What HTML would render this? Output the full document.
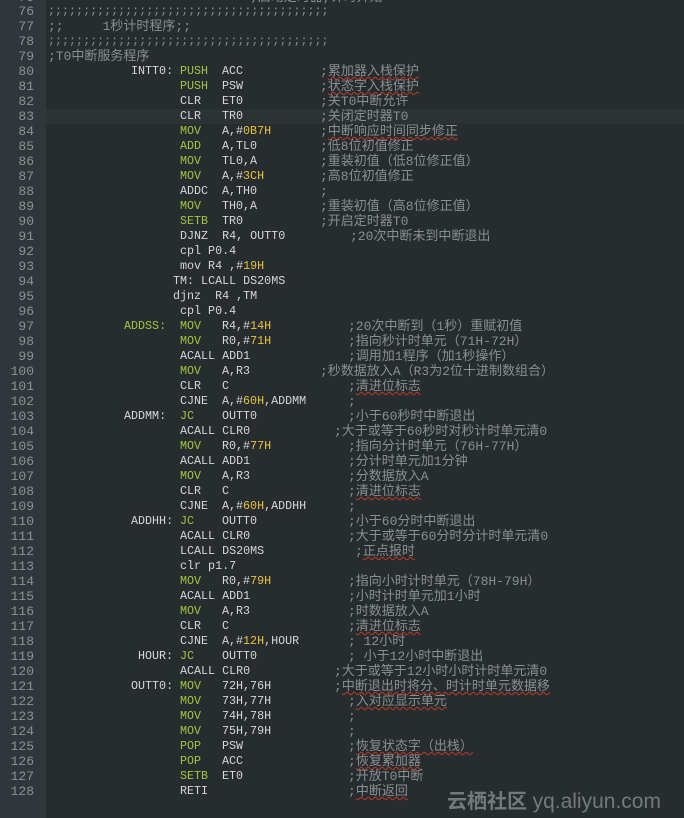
<!DOCTYPE html><html><head><meta charset="utf-8"><style>
body{margin:0;width:684px;height:818px;background:#272c2e;overflow:hidden;position:relative;font-family:"Liberation Mono","Noto Sans CJK SC",monospace;font-size:11.7px;color:#d6d6d6}
#g{position:absolute;left:0;top:0;width:46px;height:818px;background:#30373a}
.l{position:absolute;left:0;height:15px;line-height:15px;width:684px;white-space:pre}
.l .n{position:absolute;left:0;width:34px;text-align:right;color:#8c9294;font-size:13px}
.l span{position:absolute}
.g{color:#a4c440}.y{color:#e8c23c}.c{color:#8a8f91;font-size:13px}
.u{text-decoration:underline wavy #c0392b;text-decoration-thickness:1px}
#wm{position:absolute;left:447px;top:785px;font-family:"Liberation Sans","Noto Sans CJK SC",sans-serif;font-size:20px;color:#7d8284;font-weight:bold;opacity:.9}
</style></head><body><div id="g"></div>
<div class="l" style="top:-10px"><span class="n">75</span><span style="left:52px">SETB      TR0  SETB</span><span class="c" style="left:250px">;启动定时器,计时开始</span></div>
<div class="l" style="top:4px"><span class="n">76</span><span class="c" style="left:48px;font-size:11.7px">;;;;;;;;;;;;;;;;;;;;;;;;;;;;;;;;;;;;;;;;</span></div>
<div class="l" style="top:19px"><span class="n">77</span><span class="c" style="left:48px">;;     1秒计时程序;;</span></div>
<div class="l" style="top:34px"><span class="n">78</span><span class="c" style="left:48px;font-size:11.7px">;;;;;;;;;;;;;;;;;;;;;;;;;;;;;;;;;;;;;;;;</span></div>
<div class="l" style="top:49px"><span class="n">79</span><span class="c" style="left:48px">;T0中断服务程序</span></div>
<div class="l" style="top:64px"><span class="n">80</span><span style="left:131px">INTT0:</span><span class="g" style="left:180px">PUSH</span><span style="left:222px">ACC</span><span class="c" style="left:320px">;<u class="u">累加器入栈保护</u></span></div>
<div class="l" style="top:79px"><span class="n">81</span><span class="g" style="left:180px">PUSH</span><span style="left:222px">PSW</span><span class="c" style="left:320px">;<u class="u">状态字入栈保护</u></span></div>
<div class="l" style="top:94px"><span class="n">82</span><span style="left:180px">CLR</span><span style="left:222px">ET0</span><span class="c" style="left:320px">;关T0中断允许</span></div>
<div class="l" style="top:109px;background:#2d3335;left:46px;width:638px"></div>
<div class="l" style="top:109px"><span class="n">83</span><span style="left:180px">CLR</span><span style="left:222px">TR0</span><span class="c" style="left:320px">;关闭定时器T0</span></div>
<div class="l" style="top:124px"><span class="n">84</span><span class="g" style="left:180px">MOV</span><span style="left:222px">A,#<b class="y" style="font-weight:normal">0B7H</b></span><span class="c" style="left:320px">;<u class="u">中断响应时间同步修正</u></span></div>
<div class="l" style="top:139px"><span class="n">85</span><span class="g" style="left:180px">ADD</span><span style="left:222px">A,TL0</span><span class="c" style="left:320px">;低8位初值修正</span></div>
<div class="l" style="top:154px"><span class="n">86</span><span class="g" style="left:180px">MOV</span><span style="left:222px">TL0,A</span><span class="c" style="left:320px">;重装初值（低8位修正值）</span></div>
<div class="l" style="top:169px"><span class="n">87</span><span class="g" style="left:180px">MOV</span><span style="left:222px">A,#<b class="y" style="font-weight:normal">3CH</b></span><span class="c" style="left:320px">;高8位初值修正</span></div>
<div class="l" style="top:184px"><span class="n">88</span><span style="left:180px">ADDC</span><span style="left:222px">A,TH0</span><span class="c" style="left:320px">;</span></div>
<div class="l" style="top:199px"><span class="n">89</span><span class="g" style="left:180px">MOV</span><span style="left:222px">TH0,A</span><span class="c" style="left:320px">;重装初值（高8位修正值）</span></div>
<div class="l" style="top:214px"><span class="n">90</span><span class="g" style="left:180px">SETB</span><span style="left:222px">TR0</span><span class="c" style="left:320px">;开启定时器T0</span></div>
<div class="l" style="top:229px"><span class="n">91</span><span style="left:180px">DJNZ  R4, OUTT0</span><span class="c" style="left:350px">;20次中断未到中断退出</span></div>
<div class="l" style="top:244px"><span class="n">92</span><span style="left:180px">cpl P0.4</span></div>
<div class="l" style="top:259px"><span class="n">93</span><span style="left:180px">mov R4 ,#<b class="y" style="font-weight:normal">19H</b></span></div>
<div class="l" style="top:274px"><span class="n">94</span><span style="left:173px">TM: LCALL DS20MS</span></div>
<div class="l" style="top:289px"><span class="n">95</span><span style="left:173px">djnz  R4 ,TM</span></div>
<div class="l" style="top:304px"><span class="n">96</span><span style="left:180px">cpl P0.4</span></div>
<div class="l" style="top:319px"><span class="n">97</span><span class="g" style="left:124px">ADDSS:</span><span class="g" style="left:180px">MOV</span><span style="left:222px">R4,#<b class="y" style="font-weight:normal">14H</b></span><span class="c" style="left:348px">;20次中断到（1秒）重赋初值</span></div>
<div class="l" style="top:334px"><span class="n">98</span><span class="g" style="left:180px">MOV</span><span style="left:222px">R0,#<b class="y" style="font-weight:normal">71H</b></span><span class="c" style="left:348px">;指向秒计时单元（71H-72H）</span></div>
<div class="l" style="top:349px"><span class="n">99</span><span style="left:180px">ACALL ADD1</span><span class="c" style="left:348px">;调用加1程序（加1秒操作）</span></div>
<div class="l" style="top:364px"><span class="n">100</span><span class="g" style="left:180px">MOV</span><span style="left:222px">A,R3</span><span class="c" style="left:320px">;秒数据放入A（R3为2位十进制数组合）</span></div>
<div class="l" style="top:379px"><span class="n">101</span><span style="left:180px">CLR</span><span style="left:222px">C</span><span class="c" style="left:348px">;<u class="u">清进位标志</u></span></div>
<div class="l" style="top:394px"><span class="n">102</span><span style="left:180px">CJNE</span><span style="left:222px">A,#<b class="y" style="font-weight:normal">60H</b>,ADDMM</span><span class="c" style="left:348px">;</span></div>
<div class="l" style="top:409px"><span class="n">103</span><span style="left:124px">ADDMM:</span><span class="g" style="left:180px">JC</span><span style="left:222px">OUTT0</span><span class="c" style="left:348px">;小于60秒时中断退出</span></div>
<div class="l" style="top:424px"><span class="n">104</span><span style="left:180px">ACALL CLR0</span><span class="c" style="left:334px">;大于或等于60秒时对秒计时单元清0</span></div>
<div class="l" style="top:439px"><span class="n">105</span><span class="g" style="left:180px">MOV</span><span style="left:222px">R0,#<b class="y" style="font-weight:normal">77H</b></span><span class="c" style="left:348px">;指向分计时单元（76H-77H）</span></div>
<div class="l" style="top:454px"><span class="n">106</span><span style="left:180px">ACALL ADD1</span><span class="c" style="left:348px">;分计时单元加1分钟</span></div>
<div class="l" style="top:469px"><span class="n">107</span><span class="g" style="left:180px">MOV</span><span style="left:222px">A,R3</span><span class="c" style="left:348px">;分数据放入A</span></div>
<div class="l" style="top:484px"><span class="n">108</span><span style="left:180px">CLR</span><span style="left:222px">C</span><span class="c" style="left:348px">;<u class="u">清进位标志</u></span></div>
<div class="l" style="top:499px"><span class="n">109</span><span style="left:180px">CJNE</span><span style="left:222px">A,#<b class="y" style="font-weight:normal">60H</b>,ADDHH</span><span class="c" style="left:348px">;</span></div>
<div class="l" style="top:514px"><span class="n">110</span><span style="left:131px">ADDHH:</span><span class="g" style="left:180px">JC</span><span style="left:222px">OUTT0</span><span class="c" style="left:348px">;小于60分时中断退出</span></div>
<div class="l" style="top:529px"><span class="n">111</span><span style="left:180px">ACALL CLR0</span><span class="c" style="left:348px">;大于或等于60分时分计时单元清0</span></div>
<div class="l" style="top:544px"><span class="n">112</span><span style="left:180px">LCALL DS20MS</span><span class="c" style="left:355px">;<u class="u">正点报时</u></span></div>
<div class="l" style="top:559px"><span class="n">113</span><span style="left:180px">clr p1.7</span></div>
<div class="l" style="top:574px"><span class="n">114</span><span class="g" style="left:180px">MOV</span><span style="left:222px">R0,#<b class="y" style="font-weight:normal">79H</b></span><span class="c" style="left:348px">;指向小时计时单元（78H-79H）</span></div>
<div class="l" style="top:589px"><span class="n">115</span><span style="left:180px">ACALL ADD1</span><span class="c" style="left:348px">;小时计时单元加1小时</span></div>
<div class="l" style="top:604px"><span class="n">116</span><span class="g" style="left:180px">MOV</span><span style="left:222px">A,R3</span><span class="c" style="left:348px">;时数据放入A</span></div>
<div class="l" style="top:619px"><span class="n">117</span><span style="left:180px">CLR</span><span style="left:222px">C</span><span class="c" style="left:348px">;<u class="u">清进位标志</u></span></div>
<div class="l" style="top:634px"><span class="n">118</span><span style="left:180px">CJNE</span><span style="left:222px">A,#<b class="y" style="font-weight:normal">12H</b>,HOUR</span><span class="c" style="left:348px">; 12小时</span></div>
<div class="l" style="top:649px"><span class="n">119</span><span style="left:138px">HOUR:</span><span class="g" style="left:180px">JC</span><span style="left:222px">OUTT0</span><span class="c" style="left:348px">; 小于12小时中断退出</span></div>
<div class="l" style="top:664px"><span class="n">120</span><span style="left:180px">ACALL CLR0</span><span class="c" style="left:334px">;大于或等于12小时小时计时单元清0</span></div>
<div class="l" style="top:679px"><span class="n">121</span><span style="left:131px">OUTT0:</span><span class="g" style="left:180px">MOV</span><span style="left:222px">72H,76H</span><span class="c" style="left:334px">;<u class="u">中断退出时将分、时计时单元数据移</u></span></div>
<div class="l" style="top:694px"><span class="n">122</span><span class="g" style="left:180px">MOV</span><span style="left:222px">73H,77H</span><span class="c" style="left:348px">;<u class="u">入对应显示单元</u></span></div>
<div class="l" style="top:709px"><span class="n">123</span><span class="g" style="left:180px">MOV</span><span style="left:222px">74H,78H</span><span class="c" style="left:348px">;</span></div>
<div class="l" style="top:724px"><span class="n">124</span><span class="g" style="left:180px">MOV</span><span style="left:222px">75H,79H</span><span class="c" style="left:348px">;</span></div>
<div class="l" style="top:739px"><span class="n">125</span><span class="g" style="left:180px">POP</span><span style="left:222px">PSW</span><span class="c" style="left:348px">;<u class="u">恢复状态字（出栈）</u></span></div>
<div class="l" style="top:754px"><span class="n">126</span><span class="g" style="left:180px">POP</span><span style="left:222px">ACC</span><span class="c" style="left:348px">;<u class="u">恢复累加器</u></span></div>
<div class="l" style="top:769px"><span class="n">127</span><span class="g" style="left:180px">SETB</span><span style="left:222px">ET0</span><span class="c" style="left:348px">;开放T0中断</span></div>
<div class="l" style="top:784px"><span class="n">128</span><span style="left:180px">RETI</span><span class="c" style="left:348px">;<u class="u">中断返回</u></span></div>
<div id="wm">云栖社区 <span style="font-weight:normal;font-size:21px">yq.aliyun.com</span></div>
</body></html>
